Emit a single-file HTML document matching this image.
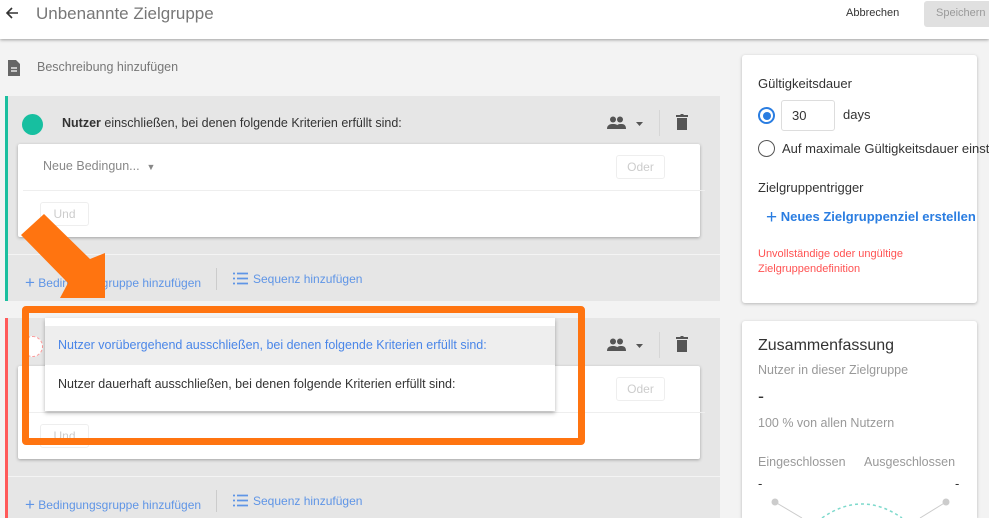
<!DOCTYPE html>
<html style="width:989px;height:518px;overflow:hidden"><head><meta charset="utf-8"><style>
*{box-sizing:border-box;margin:0;padding:0}
body{width:989px;height:518px;overflow:hidden;background:#f3f3f3;font-family:"Liberation Sans",sans-serif;position:relative;color:#333}
.a{position:absolute;white-space:nowrap}
.hdr{position:absolute;left:0;top:0;width:989px;height:39px;background:#fff;box-shadow:0 1px 3px rgba(0,0,0,.35)}
.grp{position:absolute;left:5px;width:715px;background:#e6e6e6}
.card{position:absolute;left:18px;width:682px;background:#fff;box-shadow:0 1px 3px rgba(0,0,0,.3);border-radius:2px}
.btn{position:absolute;border:1px solid #eee;border-radius:3px;color:#ccc;font-size:12px;text-align:center;line-height:22px;height:24px}
.link{color:#5f95e6;font-size:12px}
.rc{position:absolute;left:742px;width:235px;background:#fff;box-shadow:0 1px 3px rgba(0,0,0,.25);border-radius:3px}
</style></head><body>
<div class="hdr"></div>
<svg class="a" style="left:4px;top:5px" width="16" height="16" viewBox="0 0 16 16"><path d="M14 8H3M8 3L3 8l5 5" stroke="#333" stroke-width="1.6" fill="none"/></svg>
<div class="a" style="left:36px;top:4px;font-size:17px;color:#777">Unbenannte Zielgruppe</div>
<div class="a" style="left:846px;top:7px;font-size:11px;color:#333">Abbrechen</div>
<div class="a" style="left:924px;top:1px;width:70px;height:26px;background:#e0e0e0;border-radius:3px;font-size:11px;color:#999;padding:6px 0 0 12px">Speichern</div>

<svg class="a" style="left:8px;top:59px" width="12" height="17" viewBox="0 0 12 17"><path d="M0 1h8l4 4v12H0z" fill="#666"/><path d="M3 9h6M3 12h6" stroke="#fff" stroke-width="1.2"/></svg>
<div class="a" style="left:37px;top:60px;font-size:12.5px;color:#777">Beschreibung hinzufügen</div>

<div class="grp" style="top:96px;height:205px;border-left:3px solid #1bbf9f"></div>
<div class="a" style="left:22px;top:114px;width:21px;height:21px;border-radius:50%;background:#17bfa0"></div>
<div class="a" style="left:62px;top:116px;font-size:12.5px;color:#333"><b>Nutzer</b> einschließen, bei denen folgende Kriterien erfüllt sind:</div>
<svg class="a" style="left:607px;top:116px" width="40" height="14" viewBox="0 0 40 14"><circle cx="6" cy="3.5" r="3" fill="#555"/><circle cx="13" cy="3.5" r="3" fill="#555"/><path d="M0 13c0-4 3-5 6-5s6 1 6 5zM9 13c0-4 2-5 5-5s5 1 5 5z" fill="#555"/><path d="M29 6h7l-3.5 4z" fill="#555"/></svg>
<div class="a" style="left:659px;top:110px;width:1px;height:26px;background:#d6d6d6"></div>
<svg class="a" style="left:676px;top:114px" width="12" height="16" viewBox="0 0 12 16"><path d="M0 1h4l1-1h2l1 1h4v2H0zM1 4h10v12H1z" fill="#555"/></svg>
<div class="card" style="top:144px;height:93px"></div>
<div class="a" style="left:23px;top:190px;width:682px;height:1px;background:#eee"></div>
<div class="a" style="left:43px;top:159px;font-size:12.5px;color:#888">Neue Bedingun... &nbsp;<span style="font-size:9px">▼</span></div>
<div class="btn" style="left:616px;top:155px;width:49px">Oder</div>
<div class="btn" style="left:40px;top:202px;width:49px">Und</div>
<div class="a" style="left:8px;top:254px;width:712px;height:1px;background:#f4f4f4"></div>
<div class="a link" style="left:25px;top:272px"><span style="font-size:17px;position:relative;top:1px">+</span> Bedingungsgruppe hinzufügen</div>
<div class="a" style="left:216px;top:268px;width:1px;height:22px;background:#ccc"></div>
<svg class="a" style="left:233px;top:272px" width="15" height="13" viewBox="0 0 15 13"><path d="M0 1.5h2M4 1.5h11M0 6.5h2M4 6.5h11M0 11.5h2M4 11.5h11" stroke="#5f95e6" stroke-width="1.8"/></svg>
<div class="a link" style="left:253px;top:272px">Sequenz hinzufügen</div>

<div class="grp" style="top:318px;height:200px;border-left:3px solid #ff5a5a"></div>
<div class="a" style="left:22px;top:336px;width:21px;height:21px;border-radius:50%;background:#fff;border:1px dashed #f99"></div>
<svg class="a" style="left:607px;top:338px" width="40" height="14" viewBox="0 0 40 14"><circle cx="6" cy="3.5" r="3" fill="#555"/><circle cx="13" cy="3.5" r="3" fill="#555"/><path d="M0 13c0-4 3-5 6-5s6 1 6 5zM9 13c0-4 2-5 5-5s5 1 5 5z" fill="#555"/><path d="M29 6h7l-3.5 4z" fill="#555"/></svg>
<div class="a" style="left:659px;top:332px;width:1px;height:26px;background:#d6d6d6"></div>
<svg class="a" style="left:676px;top:336px" width="12" height="16" viewBox="0 0 12 16"><path d="M0 1h4l1-1h2l1 1h4v2H0zM1 4h10v12H1z" fill="#555"/></svg>
<div class="card" style="top:366px;height:93px"></div>
<div class="a" style="left:23px;top:412px;width:682px;height:1px;background:#eee"></div>
<div class="btn" style="left:616px;top:377px;width:49px">Oder</div>
<div class="btn" style="left:40px;top:424px;width:49px">Und</div>
<div class="a" style="left:8px;top:476px;width:712px;height:1px;background:#f4f4f4"></div>
<div class="a link" style="left:25px;top:494px"><span style="font-size:17px;position:relative;top:1px">+</span> Bedingungsgruppe hinzufügen</div>
<div class="a" style="left:216px;top:490px;width:1px;height:22px;background:#ccc"></div>
<svg class="a" style="left:233px;top:494px" width="15" height="13" viewBox="0 0 15 13"><path d="M0 1.5h2M4 1.5h11M0 6.5h2M4 6.5h11M0 11.5h2M4 11.5h11" stroke="#5f95e6" stroke-width="1.8"/></svg>
<div class="a link" style="left:253px;top:494px">Sequenz hinzufügen</div>

<div class="a" style="left:45px;top:318px;width:510px;height:93px;background:#fff;box-shadow:0 2px 4px rgba(0,0,0,.3)"></div>
<div class="a" style="left:45px;top:326px;width:510px;height:39px;background:#eee"></div>
<div class="a" style="left:58px;top:338px;font-size:12.5px;color:#4a86e8">Nutzer vorübergehend ausschließen, bei denen folgende Kriterien erfüllt sind:</div>
<div class="a" style="left:58px;top:377px;font-size:12.5px;color:#333">Nutzer dauerhaft ausschließen, bei denen folgende Kriterien erfüllt sind:</div>

<div class="a" style="left:22px;top:306px;width:563px;height:139px;border:7px solid #ff7410;border-radius:4px"></div>
<svg class="a" style="left:0;top:200px" width="120" height="110" viewBox="0 200 120 110"><polygon points="21,235 44,214 90,259 105,253 105,298 60,298 68,283" fill="#ff7410"/></svg>

<div class="rc" style="top:55px;height:248px"></div>
<div class="a" style="left:758px;top:76px;font-size:13px;color:#333">Gültigkeitsdauer</div>
<div class="a" style="left:758px;top:107px;width:17px;height:17px;border-radius:50%;border:2px solid #2a7de1"><div style="margin:2.5px;width:8px;height:8px;border-radius:50%;background:#2a7de1"></div></div>
<div class="a" style="left:781px;top:100px;width:54px;height:31px;border:1px solid #ddd;border-radius:3px;font-size:13px;padding:7px 0 0 10px">30</div>
<div class="a" style="left:843px;top:107px;font-size:13px">days</div>
<div class="a" style="left:758px;top:140px;width:17px;height:17px;border-radius:50%;border:1.5px solid #555"></div>
<div class="a" style="left:782px;top:141px;font-size:13px;width:207px;overflow:hidden">Auf maximale Gültigkeitsdauer einstellen</div>
<div class="a" style="left:758px;top:180px;font-size:13px">Zielgruppentrigger</div>
<div class="a" style="left:766px;top:205px;font-size:13px;color:#2a7de1;font-weight:bold"><span style="font-size:19px;font-weight:normal;position:relative;top:2px">+</span> Neues Zielgruppenziel erstellen</div>
<div class="a" style="left:758px;top:247px;font-size:11px;color:#ff5252;line-height:14.5px">Unvollständige oder ungültige<br>Zielgruppendefinition</div>

<div class="rc" style="top:321px;height:197px;border-radius:3px 3px 0 0"></div>
<div class="a" style="left:758px;top:337px;font-size:16px;color:#333">Zusammenfassung</div>
<div class="a" style="left:758px;top:363px;font-size:12.5px;color:#999">Nutzer in dieser Zielgruppe</div>
<div class="a" style="left:758px;top:386px;font-size:18px;color:#333">-</div>
<div class="a" style="left:758px;top:416px;font-size:12.5px;color:#999">100 % von allen Nutzern</div>
<div class="a" style="left:758px;top:455px;font-size:12.5px;color:#999">Eingeschlossen</div>
<div class="a" style="left:864px;top:455px;font-size:12.5px;color:#999">Ausgeschlossen</div>
<div class="a" style="left:758px;top:476px;font-size:13px">-</div>
<div class="a" style="left:955px;top:476px;font-size:13px">-</div>
<svg class="a" style="left:742px;top:490px" width="235" height="28"><circle cx="33" cy="12" r="3.5" fill="#ccc"/><circle cx="204" cy="12" r="3.5" fill="#ccc"/><path d="M33 12L60 28M204 12L178 28" stroke="#ccc"/><path d="M80 28Q120 0 160 28" stroke="#7dd9cc" stroke-dasharray="3 3" fill="none" stroke-width="1.5"/></svg>
</body></html>
